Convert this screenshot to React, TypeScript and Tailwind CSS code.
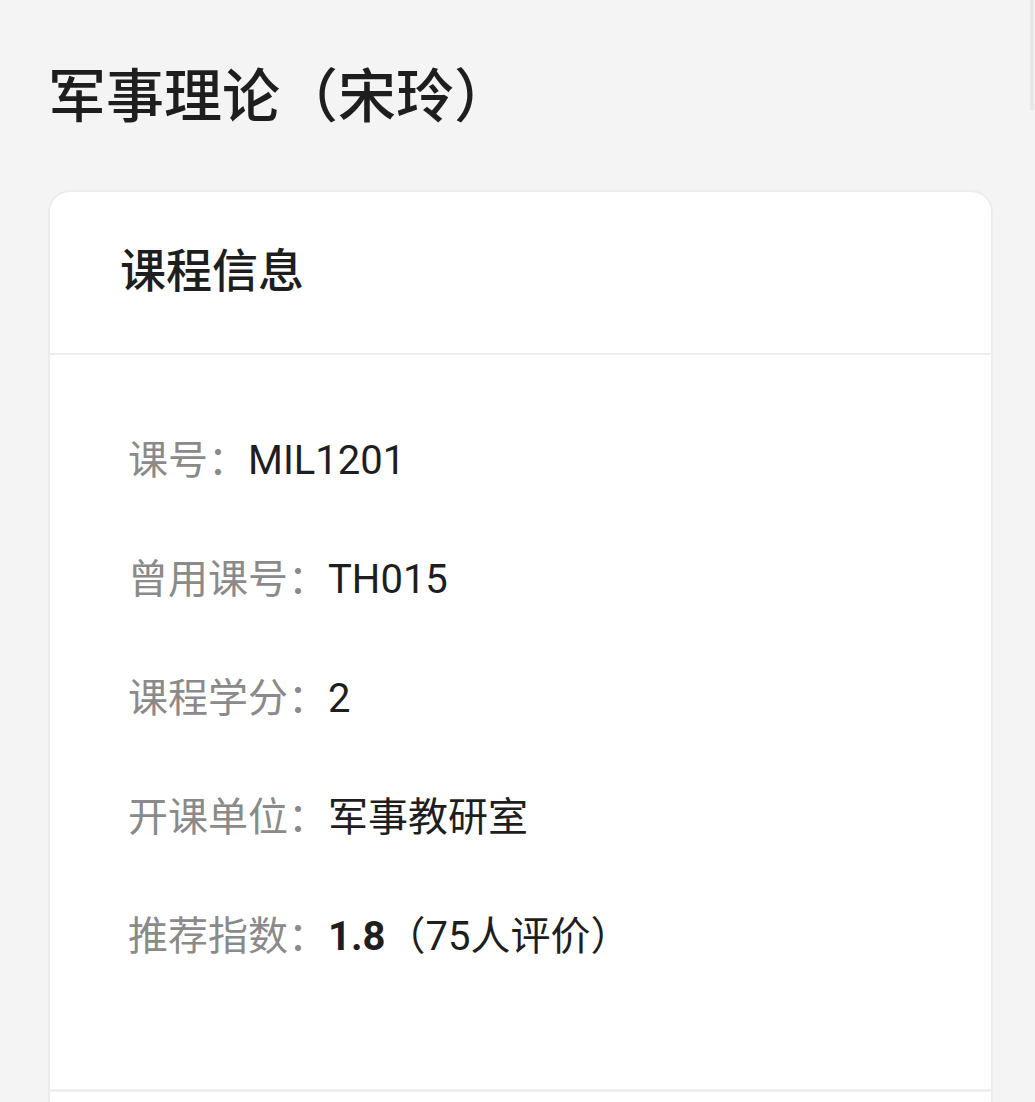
const font = {
  fontFamily: '"Roboto", "Noto Sans CJK SC", sans-serif',
};

const rows: { label: string; value: React.ReactNode }[] = [
  { label: "课号：", value: "MIL1201" },
  { label: "曾用课号：", value: "TH015" },
  { label: "课程学分：", value: "2" },
  { label: "开课单位：", value: "军事教研室" },
  {
    label: "推荐指数：",
    value: (
      <>
        <span className="font-bold">1.8</span>（75人评价）
      </>
    ),
  },
];

export default function App() {
  return (
    <div className="relative min-h-screen bg-[#f4f4f4] overflow-hidden" style={font}>
      {/* scrollbar thumb */}
      <div className="absolute right-[1px] top-0 w-[4px] h-[110px] bg-[#e6e6e6]"></div>

      <h1 className="pl-[48px] pt-[68px] text-[58px] leading-[58px] font-medium text-[#1e1e1e]">
        军事理论（宋玲）
      </h1>

      <div className="mt-[64px] ml-[48px] w-[945px] bg-white rounded-t-[22px] border-2 border-b-0 border-[#ececec]">
        <div className="h-[161px] flex items-center px-[70px] pb-[4px]">
          <h2 className="text-[46px] font-medium text-[#1e1e1e] leading-none">课程信息</h2>
        </div>
        <div className="h-[2px] bg-[#ececec]"></div>

        <div className="pl-[78px] pt-[46px] pb-[93px]">
          {rows.map((r) => (
            <div key={r.label} className="text-[40px] leading-[119px] whitespace-nowrap">
              <span className="text-[#8a8a8a]">{r.label}</span>
              <span className="text-[#1e1e1e]">{r.value}</span>
            </div>
          ))}
        </div>

        <div className="h-[3px] bg-[#efefef]"></div>
        <div className="h-[60px]"></div>
      </div>
    </div>
  );
}
